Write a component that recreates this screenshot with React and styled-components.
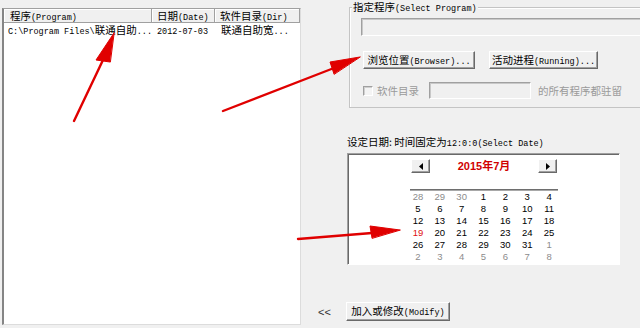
import React from 'react';
import styled, { createGlobalStyle } from 'styled-components';

const Global = createGlobalStyle`
  html, body { margin: 0; padding: 0; width: 640px; height: 328px; overflow: hidden; background: #f0f0f0; }
  body { font-family: "Noto Sans CJK SC", "Liberation Sans", sans-serif; font-size: 10.5px; color: #000; }
  * { box-sizing: border-box; }
`;

const Lat = styled.span`
  font-family: "Liberation Mono", monospace;
  font-size: 8.5px;
`;

const Page = styled.div`
  position: relative;
  display: flex;
  width: 640px;
  height: 328px;
`;

const ListPanel = styled.div`
  flex-shrink: 0;
  margin: 8px 0 3px 2px;
  width: 299px;
  height: 317px;
  background: #fff;
  border-left: 2px solid #858585;
  border-top: 1px solid #a0a0a0;
  border-right: 1px solid #dcdcdc;
  border-bottom: 1px solid #dcdcdc;
`;

const GridRow = styled.div`
  display: grid;
  grid-template-columns: 148px 63px 85px;
  height: 14px;
`;

const HeadCell = styled.div`
  background: #f0f0f0;
  border-right: 1px solid #a0a0a0;
  border-bottom: 1px solid #a0a0a0;
  box-shadow: inset 1px 1px 0 #fff;
  padding-left: ${p => p.$pad}px;
  line-height: 13px;
  white-space: nowrap;
  overflow: hidden;
`;

const Cell = styled.div`
  padding-left: ${p => p.$pad}px;
  line-height: 14px;
  white-space: nowrap;
  overflow: hidden;
`;

const RightCol = styled.div`
  flex: 1;
  display: flex;
  flex-direction: column;
  min-width: 0;
`;

const GroupBox = styled.div`
  flex-shrink: 0;
  margin: 7px 0 0 48px;
  width: 320px;
  height: 101px;
  border: 1px solid #c4c4c4;
  box-shadow: inset 1px 1px 0 #fff;
  padding: 0 0 0 11px;
  display: flex;
  flex-direction: column;
  align-items: flex-start;
`;

const GroupTitle = styled.div`
  margin: -7px 0 0 -9px;
  padding: 0 1px;
  height: 12px;
  line-height: 12px;
  background: #f0f0f0;
  white-space: nowrap;
`;

const Field = styled.div`
  flex-shrink: 0;
  margin-top: ${p => p.$mt || 0}px;
  margin-left: ${p => p.$ml || 0}px;
  width: ${p => p.$w}px;
  height: ${p => p.$h}px;
  background: #f0f0f0;
  border: 1px solid;
  border-color: #a0a0a0 #fff #fff #a0a0a0;
  box-shadow: inset 1px 1px 0 #c8c8c8;
`;

const ButtonRow = styled.div`
  display: flex;
  gap: 14px;
  margin: 15px 0 0 2px;
`;

const Button = styled.button`
  width: ${p => p.$w}px;
  height: ${p => p.$h || 18}px;
  padding: 0;
  margin: 0;
  background: #f0f0f0;
  border: 1px solid;
  border-color: #fff #696969 #696969 #fff;
  box-shadow: inset -1px -1px 0 #a0a0a0;
  font-family: inherit;
  font-size: inherit;
  color: #000;
  line-height: 15px;
  text-align: center;
  white-space: nowrap;
`;

const CheckRow = styled.div`
  display: flex;
  align-items: center;
  margin: 13px 0 0 2px;
  height: 17px;
  color: #9a9a9a;
  white-space: nowrap;
`;

const CheckBox = styled.span`
  width: 10px;
  height: 10px;
  background: #f4f4f4;
  border: 1px solid;
  border-color: #a0a0a0 #fff #fff #a0a0a0;
  box-shadow: inset 1px 1px 0 #d0d0d0;
`;

const Muted = styled.span`
  margin-left: ${p => p.$ml}px;
  line-height: 17px;
`;

const DateLabel = styled.div`
  margin: 27px 0 0 46px;
  height: 13px;
  line-height: 13px;
  white-space: nowrap;
`;

const Calendar = styled.div`
  flex-shrink: 0;
  margin: 5px 0 0 46px;
  width: 273px;
  height: 112px;
  background: #fff;
  border: 1px solid;
  border-color: #a0a0a0 #fff #fff #a0a0a0;
  box-shadow: inset 1px 1px 0 #696969;
`;

const CalInner = styled.div`
  width: 153px;
  margin: 0 auto;
  padding-top: 5px;
`;

const CalHeader = styled.div`
  display: flex;
  justify-content: space-between;
  align-items: center;
  height: 14px;
  padding: 0 3px 0 4px;
`;

const NavBtn = styled.span`
  display: flex;
  align-items: center;
  justify-content: center;
  width: 19px;
  height: 14px;
  background: #f0f0f0;
  border: 1px solid;
  border-color: #fff #696969 #696969 #fff;
  box-shadow: inset -1px -1px 0 #a0a0a0;
`;

const CalTitle = styled.span`
  font-family: "Liberation Sans", "Noto Sans CJK SC", sans-serif;
  font-weight: bold;
  font-size: 11px;
  line-height: 14px;
  color: #d00000;
`;

const Separator = styled.div`
  margin: 16px 2px 0 3px;
  height: 2px;
  border-top: 1px solid #6e6e6e;
  border-bottom: 1px solid #a8a8a8;
`;

const DayGrid = styled.div`
  display: grid;
  grid-template-columns: repeat(7, 1fr);
  font-family: "Liberation Sans", sans-serif;
  font-size: 9.5px;
  line-height: 12px;
  text-align: center;
`;

const Day = styled.span`
  color: ${p => (p.$tone === 'other' ? '#8c8c8c' : p.$tone === 'today' ? '#e01010' : '#000')};
`;

const Footer = styled.div`
  display: flex;
  align-items: center;
  margin: 37px 0 0 17px;
  height: 19px;
`;

const Back = styled.span`
  font-family: "Liberation Sans", sans-serif;
  font-size: 11px;
  color: #333;
  width: 13px;
`;

const FooterButton = styled(Button)`
  margin-left: 15px;
`;

const Overlay = styled.svg`
  position: absolute;
  left: 0;
  top: 0;
  width: 640px;
  height: 328px;
  pointer-events: none;
`;

const weeks = [
  [[28, 'other'], [29, 'other'], [30, 'other'], [1], [2], [3], [4]],
  [[5], [6], [7], [8], [9], [10], [11]],
  [[12], [13], [14], [15], [16], [17], [18]],
  [[19, 'today'], [20], [21], [22], [23], [24], [25]],
  [[26], [27], [28], [29], [30], [31], [1, 'other']],
  [[2, 'other'], [3, 'other'], [4, 'other'], [5, 'other'], [6, 'other'], [7, 'other'], [8, 'other']],
];

export default function App() {
  return (
    <>
      <Global />
      <Page>
        <ListPanel>
          <GridRow>
            <HeadCell $pad={6}>程序<Lat>(Program)</Lat></HeadCell>
            <HeadCell $pad={5}>日期<Lat>(Date)</Lat></HeadCell>
            <HeadCell $pad={5}>软件目录<Lat>(Dir)</Lat></HeadCell>
          </GridRow>
          <GridRow>
            <Cell $pad={4}><Lat>C:\Program Files\</Lat>联通自助<Lat>...</Lat></Cell>
            <Cell $pad={5}><Lat>2012-07-03</Lat></Cell>
            <Cell $pad={6}>联通自助宽<Lat>...</Lat></Cell>
          </GridRow>
        </ListPanel>
        <RightCol>
          <GroupBox>
            <GroupTitle>指定程序<Lat>(Select Program)</Lat></GroupTitle>
            <Field $mt={5} $w={300} $h={18} />
            <ButtonRow>
              <Button $w={112}>浏览位置<Lat>(Browser)...</Lat></Button>
              <Button $w={109}>活动进程<Lat>(Running)...</Lat></Button>
            </ButtonRow>
            <CheckRow>
              <CheckBox />
              <Muted $ml={4}>软件目录</Muted>
              <Field $ml={10} $w={102} $h={17} />
              <Muted $ml={7}>的所有程序都驻留</Muted>
            </CheckRow>
          </GroupBox>
          <DateLabel>设定日期: 时间固定为<Lat>12:0:0(Select Date)</Lat></DateLabel>
          <Calendar>
            <CalInner>
              <CalHeader>
                <NavBtn>
                  <svg width="4" height="7" viewBox="0 0 4 7"><path d="M4 0 L0 3.5 L4 7 Z" fill="#000" /></svg>
                </NavBtn>
                <CalTitle>2015年7月</CalTitle>
                <NavBtn>
                  <svg width="4" height="7" viewBox="0 0 4 7"><path d="M0 0 L4 3.5 L0 7 Z" fill="#000" /></svg>
                </NavBtn>
              </CalHeader>
              <Separator />
              <DayGrid>
                {weeks.flat().map(([d, tone], i) => (
                  <Day key={i} $tone={tone}>{d}</Day>
                ))}
              </DayGrid>
            </CalInner>
          </Calendar>
          <Footer>
            <Back>&lt;&lt;</Back>
            <FooterButton $w={104} $h={19}>加入或修改<Lat>(Modify)</Lat></FooterButton>
          </Footer>
        </RightCol>
        <Overlay viewBox="0 0 640 328">
          <g fill="#e00000" stroke="#e00000" strokeLinecap="round" strokeLinejoin="round">
            <line x1="74" y1="121" x2="103" y2="60" strokeWidth="2.4" />
            <polygon points="114,33 96,60 110,62" strokeWidth="1" />
            <line x1="223" y1="111" x2="334" y2="68" strokeWidth="2.4" />
            <polygon points="360,57 330,62 334,74" strokeWidth="1" />
            <line x1="298" y1="239" x2="372" y2="233" strokeWidth="2.4" />
            <polygon points="400,230 370,226 372,238" strokeWidth="1" />
          </g>
        </Overlay>
      </Page>
    </>
  );
}
